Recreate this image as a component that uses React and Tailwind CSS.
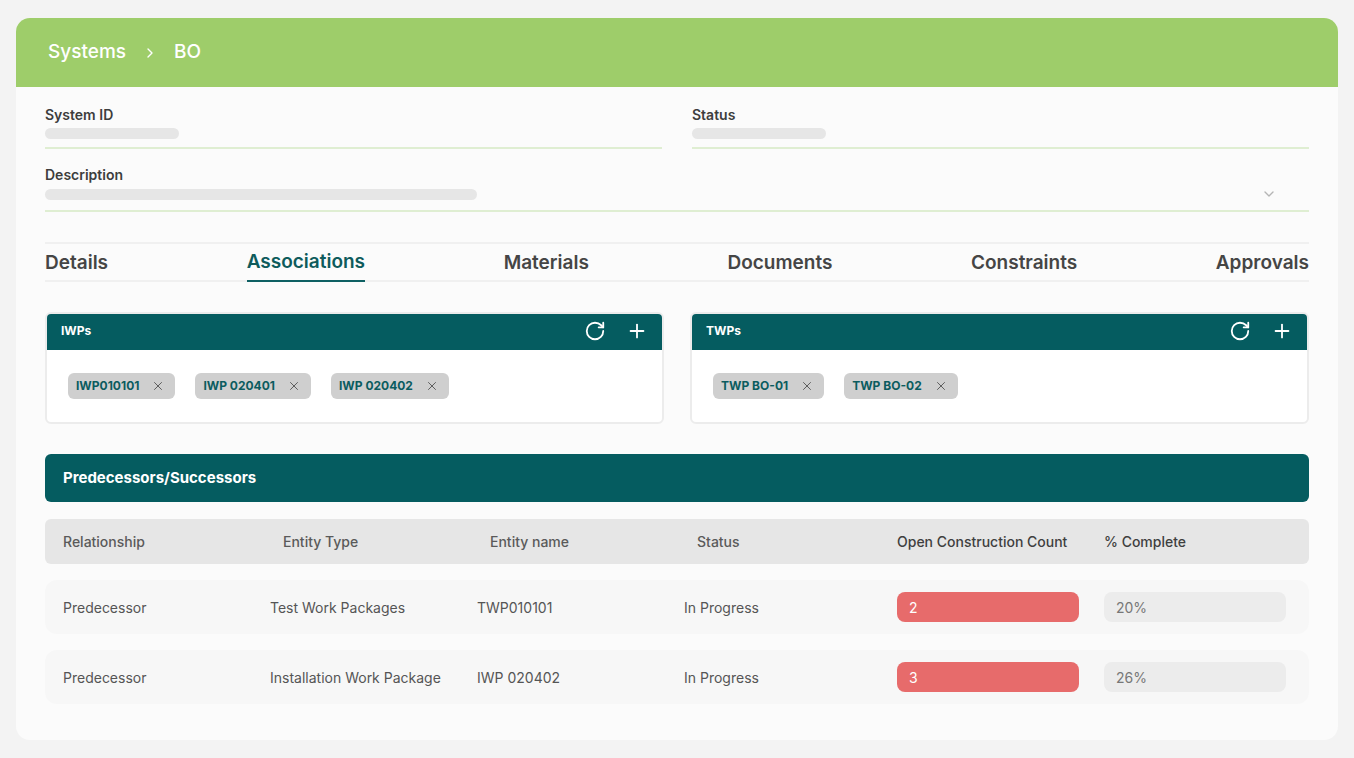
import { RotateCw, Plus, X, ChevronRight, ChevronDown } from "lucide-react";

const font = { fontFamily: "Inter, 'Noto Sans', sans-serif" };

function Chip({ label }) {
  return (
    <span className="inline-flex items-center gap-3 h-[26px] pl-2 pr-2.5 rounded-md bg-[#cfcfcf] text-[12px] font-bold text-[#0b5c5f]">
      {label}
      <X className="w-3.5 h-3.5 text-[#555]" strokeWidth={1.6} />
    </span>
  );
}

function Panel({ title, chips }) {
  return (
    <div className="flex-1 rounded-md border-2 border-[#ececec] bg-white overflow-hidden">
      <div className="h-[38px] bg-[#055c60] flex items-center justify-between px-4 -mx-[2px] -mt-[2px]">
        <span className="text-white text-[12px] font-bold">{title}</span>
        <div className="flex items-center gap-5 text-white">
          <RotateCw className="w-[22px] h-[22px]" strokeWidth={2} />
          <Plus className="w-[22px] h-[22px]" strokeWidth={2} />
        </div>
      </div>
      <div className="flex gap-5 px-[21px] pt-[23px] pb-[23px]">
        {chips.map((c) => (
          <Chip key={c} label={c} />
        ))}
      </div>
    </div>
  );
}

const rows = [
  ["Predecessor", "Test Work Packages", "TWP010101", "In Progress", "2", "20%"],
  ["Predecessor", "Installation Work Package", "IWP 020402", "In Progress", "3", "26%"],
];

export default function App() {
  return (
    <div style={font} className="w-[1354px] h-[758px] bg-[#f3f3f3] pt-[18px] px-4">
      <div className="w-[1322px] h-[722px] rounded-[14px] bg-[#fbfbfb] overflow-hidden">
        <div className="h-[69px] bg-[#9ecd6a] flex items-center gap-4 px-8 text-white text-[19px] font-medium">
          <span>Systems</span>
          <ChevronRight className="w-4 h-4" strokeWidth={2} />
          <span>BO</span>
        </div>

        <div className="px-[29px]">
          <div className="flex gap-[30px] pt-[17px]">
            {["System ID", "Status"].map((l) => (
              <div key={l} className="flex-1 border-b-2 border-[#dfeed2] pb-[8px]">
                <div className="text-[14px] font-semibold text-[#3d3d3d] h-[20px]">{l}</div>
                <div className="mt-[4px] w-[134px] h-[11px] rounded-full bg-[#e6e6e6]" />
              </div>
            ))}
          </div>
          <div className="mt-[15px] border-b-2 border-[#dfeed2] pb-[8px]">
            <div className="text-[14px] font-semibold text-[#3d3d3d] h-[20px]">Description</div>
            <div className="mt-[2px] flex items-center justify-between">
              <div className="w-[432px] h-[11px] rounded-full bg-[#e6e6e6]" />
              <ChevronDown className="w-4 h-4 text-[#b5b5b5] mr-[32px]" />
            </div>
          </div>

          <div className="mt-[30px] border-y-2 border-[#f0f0f0] flex justify-between h-[40px] text-[19px] font-semibold text-[#454545]">
            {["Details", "Associations", "Materials", "Documents", "Constraints", "Approvals"].map((t) => (
              <div
                key={t}
                className={
                  "flex items-center -mb-[2px] " +
                  (t === "Associations" ? "text-[#0e5b5c] border-b-2 border-[#0e6063]" : "")
                }
              >
                {t}
              </div>
            ))}
          </div>

          <div className="mt-[30px] flex gap-[26px]">
            <Panel title="IWPs" chips={["IWP010101", "IWP 020401", "IWP 020402"]} />
            <Panel title="TWPs" chips={["TWP BO-01", "TWP BO-02"]} />
          </div>

          <div className="mt-[30px] h-[48px] rounded-md bg-[#055c60] flex items-center px-[18px] text-white text-[15px] font-bold">
            Predecessors/Successors
          </div>

          <div className="mt-[17px] h-[45px] rounded-md bg-[#e6e6e6] grid grid-cols-[213px_207px_207px_207px_207px_1fr] items-center pl-[18px] text-[14px] font-medium text-[#5a5a5a]">
            <span>Relationship</span>
            <span className="pl-[7px]">Entity Type</span>
            <span className="pl-[7px]">Entity name</span>
            <span className="pl-[7px]">Status</span>
            <span className="text-[#3f3f3f]">Open Construction Count</span>
            <span className="text-[#3f3f3f]">% Complete</span>
          </div>

          <div className="mt-[16px] flex flex-col gap-[16px]">
            {rows.map((r, i) => (
              <div key={i} className="h-[54px] rounded-xl bg-[#f7f7f7] grid grid-cols-[207px_207px_207px_213px_207px_1fr] items-center pl-[18px] text-[14px] text-[#555]">
                <span>{r[0]}</span>
                <span>{r[1]}</span>
                <span>{r[2]}</span>
                <span>{r[3]}</span>
                <span className="w-[182px] h-[30px] rounded-lg bg-[#e76b6b] text-white flex items-center px-3">{r[4]}</span>
                <span className="w-[182px] h-[30px] rounded-lg bg-[#ececec] text-[#777] flex items-center px-3">{r[5]}</span>
              </div>
            ))}
          </div>
        </div>
      </div>
    </div>
  );
}
